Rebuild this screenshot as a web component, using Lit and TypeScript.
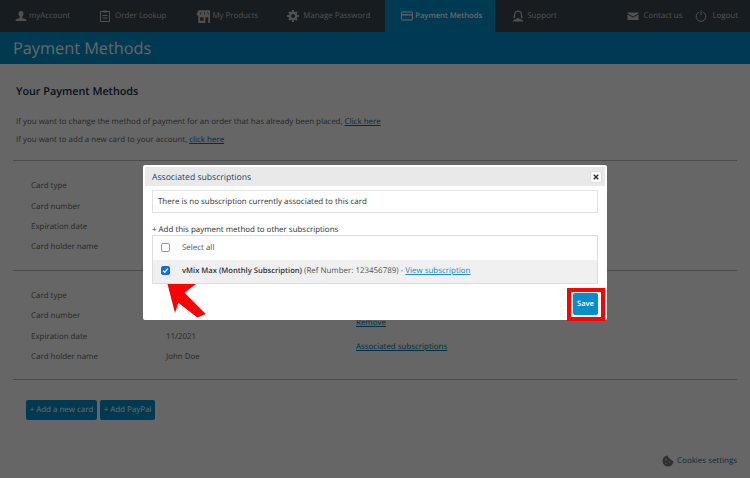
import { LitElement, html, css, svg } from "lit";
import { customElement } from "lit/decorators.js";

const icons: Record<string, any> = {
  user: svg`<path d="M6 1c1.500 0 2.500 1.100 2.500 2.700 0 1.300-.6 2.500-1.300 3.100v1.100c1.500.5 3.800 1 4.300 2.100v1H.5v-1C1 8.900 3.300 8.400 4.800 7.900V6.800C4.100 6.200 3.500 5 3.500 3.700 3.500 2.100 4.500 1 6 1z" fill="currentColor"/>`,
  order: svg`<path d="M1.500 1.500h9v10h-9z" fill="none" stroke="currentColor" stroke-width="1"/><path d="M4 .5h4v2H4zM3.500 5h5v1h-5zM3.500 7.500h5v1h-5z" fill="currentColor"/>`,
  store: svg`<path d="M2 1h10l1.500 3.500c0 .8-.7 1.300-1.500 1.300V12H2V5.800C1.200 5.800.5 5.300.5 4.500z" fill="currentColor"/><path d="M3.500 7h3v3h-3zM8 7h2.500v5H8zM4 2.500h.6L4 5H3.400zM7 2.500h.6V5H7zM9.700 2.500h.6L11 5h-.6z" fill="#000" opacity=".65"/>`,
  gear: svg`<circle cx="6" cy="6" r="3.200" fill="none" stroke="currentColor" stroke-width="2.400"/><path d="M5 0h2v2.200H5zM5 9.800h2V12H5zM0 5h2.200v2H0zM9.800 5H12v2H9.800zM1.300 2.700l1.400-1.400 1.500 1.500-1.400 1.400zM7.800 9.200l1.400-1.400 1.500 1.500-1.400 1.400zM1.300 9.300l1.500-1.500 1.400 1.400-1.500 1.500zM7.800 2.800l1.500-1.500 1.400 1.400-1.500 1.500z" fill="currentColor"/>`,
  card: svg`<rect x=".5" y="2" width="11" height="8" rx=".8" fill="none" stroke="currentColor"/><path d="M.5 4.200h11v1.300H.5z" fill="currentColor"/>`,
  support: svg`<path d="M2.500 8V5.200C2.500 2.800 4 1.200 6 1.200s3.500 1.600 3.500 4V8" fill="none" stroke="currentColor" stroke-width="1.200"/><path d="M4.800 7.500c.3.600.8.800 1.200.8s.9-.2 1.200-.8V9c1.500.3 3.800.8 4.300 2.500H.5C1 9.800 3.300 9.300 4.800 9z" fill="currentColor"/><path d="M1.600 5.500h1.200v2.800H1.600zM9.200 5.500h1.200v2.800H9.200z" fill="currentColor"/>`,
  mail: svg`<path d="M.5 2.500h11v.9L6 6.400.5 3.400z" fill="currentColor"/><path d="M.5 4.400 6 7.400l5.500-3V10H.5z" fill="currentColor"/>`,
  power: svg`<path d="M3.800 2.300a4.800 4.800 0 1 0 4.400 0" fill="none" stroke="currentColor" stroke-width="1"/><path d="M6 .5v4.700" stroke="currentColor" stroke-width="1" fill="none"/>`,
  cookie: svg`<path d="M6 .5a1.800 1.800 0 0 0 1.600 2.300 1.800 1.800 0 0 0 1.900 2 1.800 1.800 0 0 0 2 1.200A5.500 5.500 0 1 1 6 .5z" fill="currentColor"/><circle cx="4" cy="4.500" r=".9" fill="#ccc"/><circle cx="7.500" cy="7" r=".8" fill="#ccc"/><circle cx="4" cy="8.500" r=".8" fill="#ccc"/>`,
};

const icon = (name: string, cls = "") =>
  html`<svg class="icon ${cls}" viewBox="0 0 12 12">${icons[name]}</svg>`;

@customElement("app-root")
export class AppRoot extends LitElement {
  static styles = css`
    :host {
      display: block;
      width: 750px;
      height: 478px;
      font-family: "Open Sans", sans-serif;
    }
    .page {
      position: relative;
      width: 750px;
      height: 478px;
      overflow: hidden;
      background: #fff;
      color: #666;
      font-size: 7.950px;
      text-rendering: geometricPrecision;
    }
    .icon { width: 12px; height: 12px; flex: none; display: block; }
    nav {
      display: flex;
      height: 32px;
      background: #3b4650;
      color: #c8c8c8;
      padding-left: 15px;
      font-size: 7.900px;
    }
    .nav-item { display: flex; align-items: center; gap: 2px; white-space: nowrap; }
    .nav-item.order { margin-left: 29px; gap: 4px; }
    .nav-item.products { margin-left: 30px; gap: 2px; }
    .nav-item.manage { margin-left: 29px; gap: 4px; }
    .nav-item.support { margin-left: 17px; gap: 3px; }
    .nav-item .wide { width: 14px; height: 14px; }
    .tab {
      margin-left: 15px;
      width: 110px;
      box-sizing: border-box;
      padding-left: 16px;
      background: #0091cc;
      color: #fff;
      font-weight: 600;
      font-size: 7.600px;
      padding-bottom: 1px;
    }
    .nav-right { margin-left: auto; display: flex; padding-right: 12px; }
    .nav-right .nav-item { gap: 4px; }
    .nav-right .nav-item.logout { margin-left: 13px; gap: 5px; }
    .title {
      height: 32px;
      background: #0091cc;
      color: #fff;
      font-size: 16.300px;
      line-height: 32px;
      padding-left: 13px;
    }
    .content { padding: 19px 13px 0; }
    h2 {
      margin: 0 0 0 3px;
      font-size: 10.800px;
      line-height: 18px;
      font-weight: 600;
      color: #0b2a4a;
    }
    .intro { margin: 12px 0 0 3px; line-height: 18px; }
    a { color: #0b6ea8; text-decoration: underline; }
    .card {
      border-top: 1px solid #bbb;
      display: grid;
      grid-template-columns: 135px 190px 1fr;
      grid-auto-rows: 20.400px;
      align-items: center;
      padding: 15px 0 12px 18px;
    }
    .intro + .card { margin-top: 11px; }
    .card-last { border-bottom: 1px solid #bbb; }
    .links {
      grid-column: 3;
      grid-row: 1 / span 4;
      align-self: start;
      display: flex;
      flex-direction: column;
      align-items: flex-start;
      gap: 12px;
      margin-top: 31px;
      line-height: 12px;
    }
    .buttons { display: flex; gap: 3px; margin: 20px 0 0 13px; }
    button {
      font: inherit;
      text-rendering: geometricPrecision;
      border: 0;
      background: #0091cc;
      color: #fff;
      height: 20px;
      border-radius: 2px;
      padding: 0;
    }
    .b1 { width: 71px; }
    .b2 { width: 55px; }
    .cookies {
      position: absolute;
      right: 13px;
      top: 455px;
      display: flex;
      align-items: center;
      gap: 3px;
      color: #1a6aa0;
    }
    .cookies .icon { color: #777; }
    .overlay { position: absolute; inset: 0; background: rgba(0, 0, 0, 0.6); }
    .modal {
      position: absolute;
      left: 143px;
      top: 165px;
      width: 464px;
      height: 155px;
      box-sizing: border-box;
      background: #fff;
      border-radius: 2px;
      padding: 2px 2px 0;
      color: #333;
      font-size: 7.950px;
    }
    .m-head {
      height: 19px;
      background: #e9e9e9;
      display: flex;
      align-items: center;
      justify-content: space-between;
      padding: 0 3px 0 7px;
      color: #1d4468;
      font-size: 8.650px;
    }
    .close {
      width: 12px;
      height: 12px;
      box-sizing: border-box;
      background: #fafafa;
      border: 1px solid #ddd;
      border-radius: 2px;
      display: flex;
      align-items: center;
      justify-content: center;
    }
    .close svg { width: 6px; height: 6px; display: block; }
    .m-body { padding: 4px 7px 0 7px; }
    .info {
      height: 23px;
      box-sizing: border-box;
      border: 1px solid #e2e2e2;
      display: flex;
      align-items: center;
      padding-left: 5px;
    }
    .add { margin-top: 12px; line-height: 10px; }
    .list { border: 1px solid #ddd; }
    .row {
      height: 23.500px;
      box-sizing: border-box;
      display: flex;
      align-items: center;
      padding-left: 8px;
      gap: 12px;
      color: #555;
    }
    .row.sel { background: #f0f0f0; padding-bottom: 1px; }
    .row strong { font-weight: 600; color: #333; font-size: 7.600px; }
    .row a { color: #1b8ccc; }
    .cb {
      width: 9px;
      height: 9px;
      box-sizing: border-box;
      border: 1px solid #999;
      border-radius: 2px;
      flex: none;
      background: #fff;
    }
    .cb.on {
      background: #0a6fe8;
      border-color: #0a6fe8;
      display: flex;
      align-items: center;
      justify-content: center;
    }
    .cb.on svg { width: 7px; height: 7px; display: block; }
    .m-foot { display: flex; justify-content: flex-end; margin-top: 4px; }
    .mark { border: 4px solid #f00; padding: 1px 3px 2px 2px; }
    .save {
      display: block;
      width: 25px;
      height: 22px;
      background: #0a8ccc;
      font-size: 7.500px;
      font-weight: 600;
    }
    .arrow { position: absolute; left: 160px; top: 280px; width: 50px; height: 42px; }
  `;

  private cardRows(rows: [string, string][]) {
    return rows.map(
      ([label, value], i) => html`
        <span style="grid-row: ${i + 1}; grid-column: 1">${label}</span>
        <span style="grid-row: ${i + 1}; grid-column: 2">${value}</span>
      `
    );
  }

  render() {
    return html`
      <div class="page">
        <nav>
          <div class="nav-item">${icon("user")}<span>myAccount</span></div>
          <div class="nav-item order">${icon("order")}<span>Order Lookup</span></div>
          <div class="nav-item products">${icon("store", "wide")}<span>My Products</span></div>
          <div class="nav-item manage">${icon("gear")}<span>Manage Password</span></div>
          <div class="nav-item tab">${icon("card")}<span>Payment Methods</span></div>
          <div class="nav-item support">${icon("support")}<span>Support</span></div>
          <div class="nav-right">
            <div class="nav-item">${icon("mail")}<span>Contact us</span></div>
            <div class="nav-item logout">${icon("power")}<span>Logout</span></div>
          </div>
        </nav>
        <div class="title">Payment Methods</div>
        <div class="content">
          <h2>Your Payment Methods</h2>
          <div class="intro">
            <div>If you want to change the method of payment for an order that has already been placed, <a>Click here</a></div>
            <div>If you want to add a new card to your account, <a>click here</a></div>
          </div>
          <div class="card">
            ${this.cardRows([["Card type", ""], ["Card number", ""], ["Expiration date", ""], ["Card holder name", ""]])}
          </div>
          <div class="card card-last">
            ${this.cardRows([["Card type", ""], ["Card number", ""], ["Expiration date", "11/2021"], ["Card holder name", "John Doe"]])}
            <div class="links"><a>Remove</a><a>Associated subscriptions</a></div>
          </div>
          <div class="buttons">
            <button class="b1">+ Add a new card</button>
            <button class="b2">+ Add PayPal</button>
          </div>
        </div>
        <div class="cookies">${icon("cookie")}<span>Cookies settings</span></div>
        <div class="overlay"></div>
        <div class="modal">
          <div class="m-head">
            <span>Associated subscriptions</span>
            <span class="close">
              <svg viewBox="0 0 6 6"><path d="M.8.8l4.400 4.400M5.200.8.800 5.200" stroke="#333" stroke-width="1.500"/></svg>
            </span>
          </div>
          <div class="m-body">
            <div class="info">There is no subscription currently associated to this card</div>
            <div class="add">+ Add this payment method to other subscriptions</div>
            <div class="list">
              <div class="row"><span class="cb"></span><span>Select all</span></div>
              <div class="row sel">
                <span class="cb on"><svg viewBox="0 0 8 8"><path d="M1.300 4.200 3.200 6 6.700 1.800" fill="none" stroke="#fff" stroke-width="1.600"/></svg></span>
                <span><strong>vMix Max (Monthly Subscription)</strong> (Ref Number: 123456789) - <a>View subscription</a></span>
              </div>
            </div>
          </div>
          <div class="m-foot">
            <div class="mark"><button class="save">Save</button></div>
          </div>
        </div>
        <svg class="arrow" viewBox="160 280 50 42">
          <path d="M167.500 284H196L184.500 292.700 205.700 314 197.300 317.500 178.300 302.700 175 313z" fill="#f00"/>
        </svg>
      </div>
    `;
  }
}
